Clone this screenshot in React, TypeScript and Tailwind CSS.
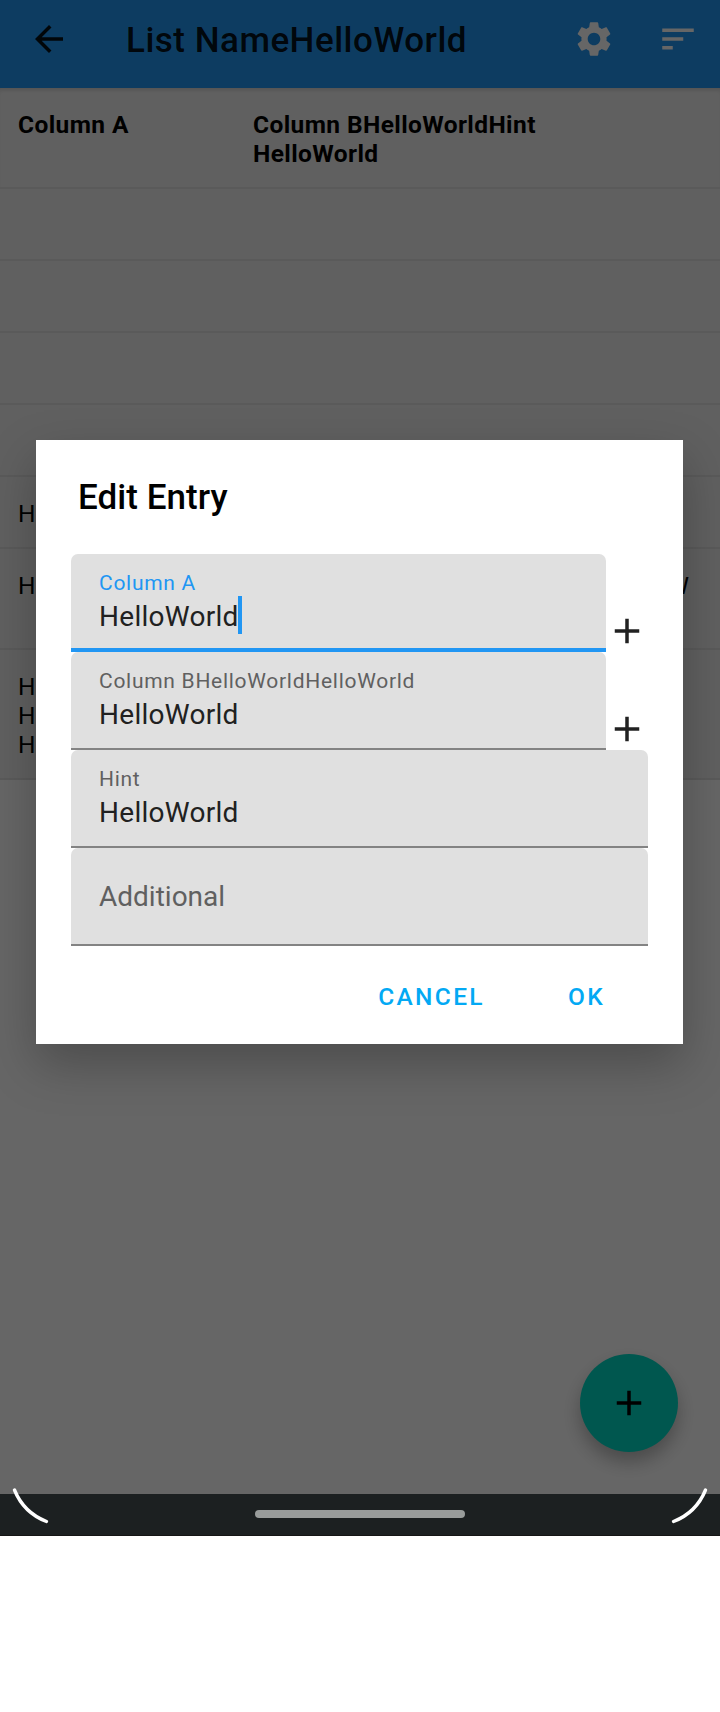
import React from "react";

function Plus({ className }: { className: string }) {
  return (
    <svg viewBox="0 0 42 42" className={className} fill="currentColor">
      <path d="M8.75 19.25h24.5v3.5h-24.5z" />
      <path d="M19.25 8.75h3.5v24.5h-3.5z" />
    </svg>
  );
}

function TopBar() {
  return (
    <header className="flex h-[88px] items-center bg-[#2196f3] pb-[10px] text-black/90">
      <svg viewBox="0 0 24 24" className="ml-[28px] h-[42px] w-[42px] shrink-0" fill="currentColor">
        <path d="M20 11H7.83l5.59-5.59L12 4l-8 8 8 8 1.41-1.41L7.83 13H20v-2z" />
      </svg>
      <h1 className="ml-[56px] flex-1 pt-[2px] text-[35px] leading-[41px] font-medium tracking-[0.5px] whitespace-nowrap">
        List NameHelloWorld
      </h1>
      <svg viewBox="0 0 24 24" className="h-[42px] w-[42px] shrink-0 text-white" fill="currentColor">
        <path d="M19.14 12.94c.04-.3.06-.61.06-.94s-.02-.64-.07-.94l2.03-1.58c.18-.14.23-.41.12-.61l-1.92-3.32c-.12-.22-.37-.29-.59-.22l-2.39.96c-.5-.38-1.03-.7-1.62-.94l-.36-2.54c-.04-.24-.24-.41-.48-.41h-3.84c-.24 0-.43.17-.47.41l-.36 2.54c-.59.24-1.13.57-1.62.94l-2.39-.96c-.22-.08-.47 0-.59.22L2.74 8.87c-.12.21-.08.47.12.61l2.03 1.58c-.05.3-.09.63-.09.94s.02.64.07.94l-2.03 1.58c-.18.14-.23.41-.12.61l1.92 3.32c.12.22.37.29.59.22l2.39-.96c.5.38 1.03.7 1.62.94l.36 2.54c.05.24.24.41.48.41h3.84c.24 0 .44-.17.47-.41l.36-2.54c.59-.24 1.13-.56 1.62-.94l2.39.96c.22.08.47 0 .59-.22l1.92-3.32c.12-.22.07-.47-.12-.61l-2.01-1.58zM12 15.6c-1.98 0-3.6-1.62-3.6-3.6s1.62-3.6 3.6-3.6 3.6 1.62 3.6 3.6-1.62 3.6-3.6 3.6z" />
      </svg>
      <svg viewBox="0 0 24 24" className="mr-[21px] ml-[42px] h-[42px] w-[42px] shrink-0 text-white" fill="currentColor">
        <path d="M3 18h6v-2H3v2zM3 6v2h18V6H3zm0 7h12v-2H3v2z" />
      </svg>
    </header>
  );
}

const rows: { height: string; left: string[]; right: string }[] = [
  { height: "h-[72px]", left: [], right: "" },
  { height: "h-[72px]", left: [], right: "" },
  { height: "h-[72px]", left: [], right: "" },
  { height: "h-[72px]", left: [], right: "" },
  { height: "h-[72px]", left: ["H"], right: "" },
  { height: "h-[101px]", left: ["H"], right: "W" },
  { height: "h-[130px]", left: ["H", "H", "H"], right: "" },
];

function Table() {
  return (
    <main className="text-[24.5px] leading-[29px] text-black">
      <div className="flex h-[101px] border-b-2 border-[#e2e2e2] bg-[#f1f1f1] pt-[22px] pl-[18px] font-bold tracking-[0.4px] shadow-[inset_0_4px_4px_-2px_rgba(0,0,0,0.15)]">
        <div className="w-[235px]">Column A</div>
        <div>
          Column BHelloWorldHint
          <br />
          HelloWorld
        </div>
      </div>
      {rows.map((row, i) => (
        <div key={i} className={`flex border-b-2 border-[#e2e2e2] bg-[#f1f1f1] pt-[22px] pl-[18px] ${row.height}`}>
          <div className="w-[235px]">
            {row.left.map((t, j) => (
              <div key={j}>{t}</div>
            ))}
          </div>
          <div className="w-[436px] text-right">{row.right}</div>
        </div>
      ))}
    </main>
  );
}

function Field({ label, value, active, add }: { label: string; value?: string; active?: boolean; add?: boolean }) {
  return (
    <div className="flex h-[98px]">
      <div
        className={`flex-1 rounded-t-[7px] bg-[#e0e0e0] pl-[28px] ${
          active ? "border-b-4 border-[#2196f3]" : "border-b-2 border-[#838383]"
        }`}
      >
        {value ? (
          <>
            <div
              className={`pt-[17px] text-[21px] leading-[25px] tracking-[0.72px] ${
                active ? "text-[#2196f3]" : "text-[#606060]"
              }`}
            >
              {label}
            </div>
            <div className="flex h-[38px] items-center text-[28px] leading-[34px] tracking-[0.28px] text-[#212121]">
              <span className="pt-[3px]">{value}</span>
              {active && <span className="-ml-px h-[38px] w-1 bg-[#2196f3]" />}
            </div>
          </>
        ) : (
          <div className="pt-[32px] text-[28px] leading-[33px] text-[#606060]">{label}</div>
        )}
      </div>
      {add && (
        <div className="flex w-[42px] items-end text-[#212121]">
          <Plus className="h-[42px] w-[42px]" />
        </div>
      )}
    </div>
  );
}

function EditDialog() {
  return (
    <section className="h-[604px] w-[647px] bg-white px-[35px] shadow-[0_20px_46px_rgba(0,0,0,0.26)]">
      <h2 className="pt-[37px] pl-[7px] text-[35px] leading-[41px] font-medium tracking-[0.06px] text-black">Edit Entry</h2>
      <div className="mt-[36px]">
        <Field label="Column A" value="HelloWorld" active add />
        <Field label="Column BHelloWorldHelloWorld" value="HelloWorld" add />
        <Field label="Hint" value="HelloWorld" />
        <Field label="Additional" />
      </div>
      <div className="flex justify-end gap-[83px] pt-[36px] pr-[43px] text-[24.5px] leading-[29px] font-medium tracking-[2.35px] text-[#03a9f4]">
        <button>CANCEL</button>
        <button>OK</button>
      </div>
    </section>
  );
}

export default function App() {
  return (
    <div className="h-[1712px] w-[720px] overflow-hidden bg-white font-[Roboto,sans-serif]">
      <div className="relative flex h-[1536px] flex-col">
        <div className="h-[1494px] bg-white">
          <TopBar />
          <Table />
        </div>
        <div className="absolute right-[42px] bottom-[84px] flex h-[98px] w-[98px] items-center justify-center rounded-full bg-[#00dac5] text-black shadow-[0_10px_18px_rgba(0,0,0,0.27)]">
          <Plus className="h-[42px] w-[42px]" />
        </div>
        <div className="absolute inset-x-0 top-0 flex h-[1494px] items-start justify-center bg-black/60 pt-[440px] pr-[1px]">
          <EditDialog />
        </div>
        <nav className="flex h-[42px] items-start justify-center border-b border-[#151515] bg-[#1c2021] pt-4">
          <div className="h-2 w-[210px] rounded-full bg-[#999c9b]" />
        </nav>
        <svg viewBox="0 0 720 50" className="absolute inset-x-0 bottom-0 h-[50px] w-[720px]" fill="none" stroke="#fff" strokeWidth="3.4" strokeLinecap="round">
          <path d="M14.5 4C21 20 31 29.500 46.500 35.500" />
          <path d="M705.500 4C699 20 689 29.500 673.500 35.500" />
        </svg>
      </div>
    </div>
  );
}
